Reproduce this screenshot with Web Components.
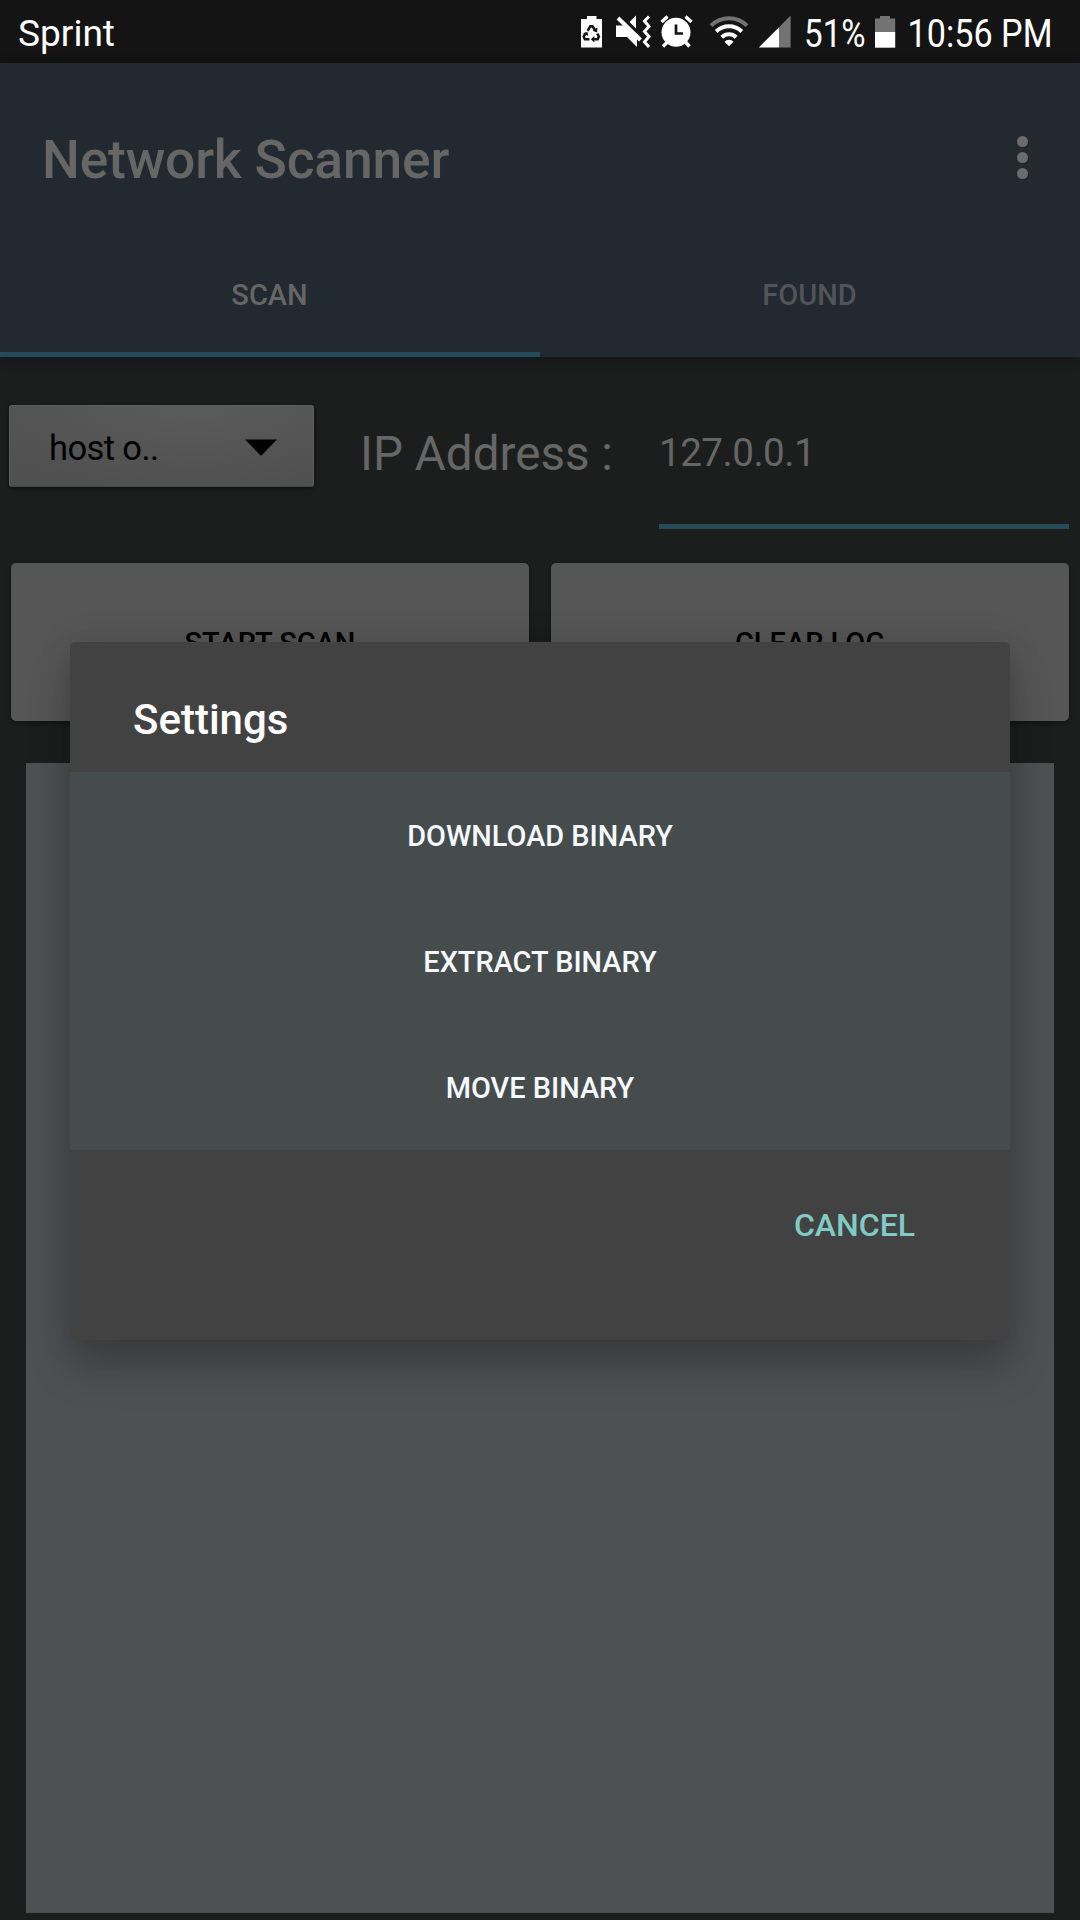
<!DOCTYPE html>
<html lang="en"><head><meta charset="utf-8"><title>Network Scanner</title>
<style>
html,body{margin:0;padding:0;background:#1c1e1d}
body{font-family:Roboto,"Liberation Sans",sans-serif;width:1080px;height:1920px;overflow:hidden}
</style></head><body>
<network-scanner></network-scanner>
<script>
const define=(name,html)=>customElements.define(name,class extends HTMLElement{
  constructor(){super();this.attachShadow({mode:'open'}).innerHTML=html;}
});

define('status-bar',`<style>
:host{display:flex;height:63px;background:#141414;color:#fff}
svg{display:block;flex:none;height:63px;overflow:visible}
text{font-family:Roboto,sans-serif;fill:#fff}
.gap{flex:1}
</style>
<svg width="130" viewBox="0 0 130 63"><text x="18" y="46" font-size="37" textLength="97" lengthAdjust="spacingAndGlyphs">Sprint</text></svg>
<span class="gap"></span>
<svg width="32" viewBox="576 0 32 63" fill="#fff"><path d="M587 16h9.500v3h5.500v28.500h-21v-28.500h6z"/>
<g fill="none" stroke="#141414" stroke-width="2.500"><path d="M587.600 30.800l2.700-4.500h2.200l2.400 3.700M597.300 33.500l1.600 3.100-1.200 2.700h-4M589.500 39.300h-4.600l-1.200-2.700 1.800-3.200"/></g>
<g fill="#141414"><path d="M597.400 27.600l-.2 4.800-4.600-1.700zM594.300 36v6.600l-3.400-3.300zM583 33.300l4.400-1.500.9 4.300z"/></g></svg>
<svg width="46" viewBox="608 0 46 63" fill="#fff"><path d="M629.500 22l6.500-6.500v13z"/><path d="M616 25.500h7.500l13.500 13v8.500l-10-10h-11z"/>
<path d="M618 18L640.500 40" stroke="#fff" stroke-width="4"/><path d="M649 16.500l-4.500 4.500 4.500 5.500-4.500 5 4.500 5-4.500 5.500 4.500 5" fill="none" stroke="#fff" stroke-width="3"/></svg>
<svg width="48" viewBox="654 0 48 63" fill="none" stroke="#fff"><circle cx="676" cy="32.300" r="14.500" fill="#fff" stroke="none"/><path d="M661.500 22l6-5.500M685.500 16.500l6 5.500M667.500 42l-4.500 4.500M685.500 42l4 4.500" stroke-width="3.400"/><path d="M676 24.500v9h7" stroke="#141414" stroke-width="2.700"/></svg>
<svg width="50" viewBox="702 0 50 63" fill="none" stroke="#fff" stroke-width="4"><path d="M711 25.700a25.500 25.500 0 0 1 36 0" stroke="#737373"/><path d="M716.200 31.500a18.300 18.300 0 0 1 25.600 0"/><path d="M721.800 37.200a10.500 10.500 0 0 1 14.400 0"/><path d="M729 46.300l-4.500-4.500a6 6 0 0 1 9 0z" fill="#fff" stroke="none"/></svg>
<svg width="48" viewBox="752 0 48 63"><path d="M758.800 47.600L779 27.200v20.400z" fill="#fff"/><path d="M779 27.200L790.600 15.600v32H779z" fill="#737373"/></svg>
<svg width="72" viewBox="800 0 72 63"><text transform="translate(804 47) scale(.85 1)" font-size="39">51%</text></svg>
<svg width="28" viewBox="872 0 28 63"><path d="M880 16h10v2.500h5.200v13.500H875V18.500h5z" fill="#737373"/><path d="M875 32h20.200v15.700H875z" fill="#fff"/></svg>
<svg width="180" viewBox="900 0 180 63"><text x="907.500" y="47" font-size="39" textLength="145" lengthAdjust="spacingAndGlyphs">10:56 PM</text></svg>`);

define('app-bar',`<style>
:host{display:flex;flex-direction:column;height:294px;background:#222930;box-shadow:0 2px 10px rgba(0,0,0,.35);color:#666}
.top{display:flex;align-items:center;justify-content:space-between;height:193px;padding:0 52px 1px 42px;font:500 53.400px/60px Roboto,sans-serif;letter-spacing:-.200px}
.dots{display:flex;flex-direction:column;gap:5px;padding-bottom:4px}
i{display:block;width:11px;height:11px;border-radius:50%;background:#6b6b6b}
nav{display:flex;flex:1}
</style><div class="top"><slot name="title"></slot><div class="dots"><i></i><i></i><i></i></div></div><nav><slot></slot></nav>`);

define('app-tab',`<style>
:host{display:flex;flex:1;box-sizing:border-box;justify-content:center;align-items:center;padding:0 1px 19px 0;border-bottom:5px solid transparent;font:500 29px/34px Roboto,sans-serif;color:#515459}
:host([active]){color:#666;border-bottom-color:#254a59}
</style><slot></slot>`);

define('host-spinner',`<style>
:host{display:flex;box-sizing:border-box;width:305px;height:82px;align-items:center;justify-content:space-between;padding:3px 36px 0 39px;border:1px solid #5f5f5f;border-bottom-color:#484848;border-radius:3px;background:radial-gradient(ellipse 260px 80px at 60% 0,#5b5b5b,#505050);box-shadow:0 1px 4px rgba(0,0,0,.6);font-size:34.500px;letter-spacing:-.600px;line-height:42px;color:#000}
svg{display:block}
</style><slot></slot><svg width="32" height="17" viewBox="0 0 32 17"><path d="M0 .5h32L16 17z"/></svg>`);

define('ip-field',`<style>
:host{display:block;width:410px;height:106px;box-sizing:border-box;border-bottom:5px solid #254a59;font-size:38.600px;letter-spacing:-.500px;line-height:60px;color:#666}
</style><slot></slot>`);

define('raised-button',`<style>
:host{display:flex;flex:1;height:158px;box-sizing:border-box;padding-top:2px;align-items:center;justify-content:center;border-radius:5px;background:#565656;box-shadow:0 2px 5px rgba(0,0,0,.4);font:500 29px/34px Roboto,sans-serif;color:#000}
</style><slot></slot>`);

define('flat-button',`<style>
:host{display:flex;height:126px;box-sizing:border-box;padding-top:2px;align-items:center;justify-content:center;font:500 28.9px/34px Roboto,sans-serif;color:#f5f9ff}
</style><slot></slot>`);

define('settings-dialog',`<style>
:host{display:flex;flex-direction:column;width:940px;height:698px;border-radius:5px;background:#424242;box-shadow:0 28px 42px rgba(0,0,0,.22),0 0 34px rgba(0,0,0,.12)}
header{box-sizing:border-box;height:130px;padding:53px 0 0 63px;font:500 42px/50px Roboto,sans-serif;color:#fff}
section{background:#464c4b}
footer{display:flex;justify-content:flex-end;padding:55px 95px 0 0;font:500 32px/40px Roboto,sans-serif;color:#80cbc4}
</style><header><slot name="title"></slot></header><section><slot></slot></section><footer><slot name="action"></slot></footer>`);

define('network-scanner',`<style>
:host{display:flex;flex-direction:column;position:relative;width:1080px;height:1920px;background:#1c1e1d}
.row{display:flex;align-items:flex-start;height:206px;box-sizing:border-box;padding:48px 11px 0 9px}
.label{font-size:47.6px;line-height:56px;margin:21px 0 0 46px;color:#666;width:299px;white-space:nowrap}
ip-field{margin-top:18px}
.buttons{display:flex;gap:22px;padding:0 11px}
.log{margin:42px 26px 7px;flex:1;background:#4d5154}
settings-dialog{position:absolute;left:70px;top:642px}
</style>
<status-bar></status-bar>
<app-bar><span slot="title">Network Scanner</span><app-tab active>SCAN</app-tab><app-tab>FOUND</app-tab></app-bar>
<div class="row"><host-spinner>host o..</host-spinner><span class="label">IP Address :</span><ip-field>127.0.0.1</ip-field></div>
<div class="buttons"><raised-button>START SCAN</raised-button><raised-button>CLEAR LOG</raised-button></div>
<div class="log"></div>
<settings-dialog><span slot="title">Settings</span><flat-button>DOWNLOAD BINARY</flat-button><flat-button>EXTRACT BINARY</flat-button><flat-button>MOVE BINARY</flat-button><span slot="action">CANCEL</span></settings-dialog>`);
</script></body></html>
